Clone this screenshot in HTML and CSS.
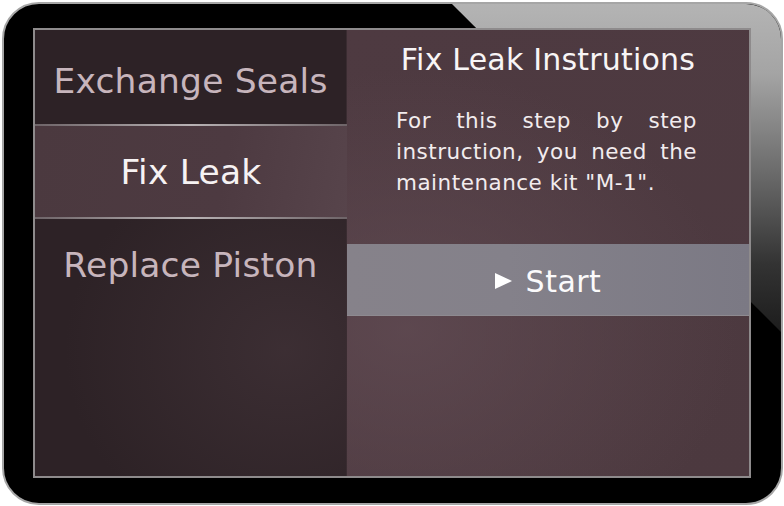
FILE: index.html
```html
<!DOCTYPE html>
<html>
<head>
<meta charset="utf-8">
<link rel="stylesheet" href="styles.css">
</head>
<body>
<div class="tablet">
  <div class="screen">
    <nav class="menu">
      <div class="item item-first">Exchange Seals</div>
      <div class="sep"></div>
      <div class="item item-active">Fix Leak</div>
      <div class="sep"></div>
      <div class="item item-last">Replace Piston</div>
    </nav>
    <main class="content">
      <h1 class="title">Fix Leak Instrutions</h1>
      <p class="text">For this step by step instruction, you need the maintenance kit "M-1".</p>
      <button class="start"><svg class="play" width="17" height="16" viewBox="0 0 17 16"><polygon points="0,0 17,8 0,16" fill="#fff"/></svg><span>Start</span></button>
    </main>
  </div>
</div>
</body>
</html>
```

FILE: styles.css
```css
html, body {
  margin: 0;
  padding: 0;
  background: #fff;
}

body {
  font-family: "DejaVu Sans", Verdana, sans-serif;
}

.tablet {
  position: relative;
  box-sizing: border-box;
  width: 781px;
  height: 503px;
  margin: 2px 0 0 2px;
  border: 2px solid #a6a6a6;
  border-radius: 37px;
  background: #000;
  overflow: hidden;
  padding: 24px 0 0 29px;
}

.tablet::before {
  content: "";
  position: absolute;
  inset: 0;
  background: linear-gradient(to bottom, #b4b4b4 0, #a4a4a4 70px, #6a6a6a 170px, #333 260px, #1c1c1c 330px);
  clip-path: polygon(448px 0, 100% 0, 100% 328px);
}

.screen {
  position: relative;
  z-index: 1;
  box-sizing: border-box;
  width: 718px;
  height: 450px;
  border: 2px solid #8e8b8c;
  display: flex;
  background: #4f3b42;
}

.menu {
  width: 312px;
  flex: none;
  display: flex;
  flex-direction: column;
  background:
    radial-gradient(ellipse 220px 200px at 250px 320px, rgba(72, 56, 62, 0.55), rgba(72, 56, 62, 0) 100%),
    #2d2226;
  border-right: 1px solid #3a2c31;
  box-sizing: border-box;
}

.item {
  display: flex;
  justify-content: center;
  align-items: center;
  font-size: 34.5px;
  color: #c7b5bc;
  letter-spacing: 0.2px;
}

.item-first {
  height: 94px;
  box-sizing: border-box;
  padding-top: 7px;
}

.item-active {
  height: 91px;
  color: #f6f2f3;
  background: linear-gradient(100deg, #4b393f 0%, #4d3a41 60%, #57444b 100%);
  margin-right: -1px;
}

.item-last {
  align-items: flex-start;
  padding-top: 26px;
  flex: 1;
}

.sep {
  height: 2px;
  background: linear-gradient(to right, #6e6468 0%, #b8b2b4 50%, #6e6468 100%);
  margin-right: -1px;
}

.content {
  flex: 1;
  display: flex;
  flex-direction: column;
  background:
    radial-gradient(ellipse 330px 260px at 60px 300px, rgba(98, 76, 84, 0.75), rgba(98, 76, 84, 0) 100%),
    linear-gradient(160deg, #4e3a41 0%, #4c393f 100%);
}

.title {
  margin: 13px 0 0;
  font-size: 30px;
  font-weight: normal;
  line-height: 34px;
  text-align: center;
  color: #f8f5f6;
  letter-spacing: 0.2px;
}

.text {
  margin: 28px 0 0;
  padding: 0 52px 0 49px;
  font-size: 21.5px;
  line-height: 31px;
  text-align: justify;
  color: #f2ecee;
  letter-spacing: 0.5px;
}

.start {
  margin-top: 46px;
  height: 72px;
  border: none;
  border-bottom: 1px solid #8e8a90;
  padding: 3px 0 0;
  display: flex;
  align-items: center;
  justify-content: center;
  gap: 14px;
  font-family: "DejaVu Sans", Verdana, sans-serif;
  font-size: 30px;
  color: #fbfafb;
  background: linear-gradient(to right, #86828a 0%, #84818a 40%, #7b7984 100%);
  letter-spacing: 0.5px;
}

.play {
  display: block;
}
```
